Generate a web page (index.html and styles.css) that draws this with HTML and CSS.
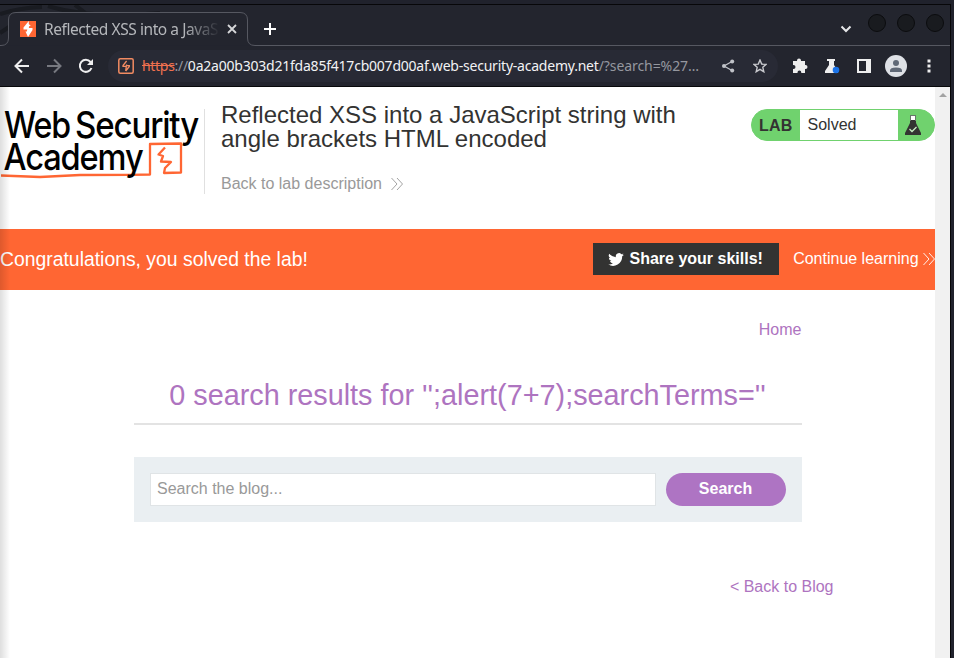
FILE: index.html
```html
<!DOCTYPE html>
<html lang="en">
<head>
<meta charset="utf-8">
<title>Reflected XSS into a JavaScript string with angle brackets HTML encoded</title>
<link rel="stylesheet" href="styles.css">
</head>
<body>
<div class="browser">
  <div class="tabbar">
    <svg class="tab-outline" width="950" height="41" viewBox="0 0 950 41">
      <path class="decor" d="M48 1Q90 14 160 8M0 9Q18 3 42 2M75 0L88 10M0 28L9 22" />
      <path class="tab-shape" d="M0 40.5H1Q8.500 40.500 8.500 33V15Q8.500 7.500 16 7.500H240Q247.500 7.500 247.500 15V33Q247.500 40.500 255 40.500H950" />
    </svg>
    <div class="tab">
      <svg class="favicon" width="16" height="16" viewBox="0 0 16 16"><path fill="#ff6633" d="M0 0h16v16H0z"/><path fill="#fff" d="M8.800 0L3.500 6.500V8.500H7.300L6.800 10.500H5.500L8 16L12.500 9V7H8.800L9.300 5H10.800L8.800 3z"/></svg>
      <span class="tab-title">Reflected XSS into a JavaSc</span>
      <svg class="close" width="10" height="10" viewBox="0 0 10 10"><path d="M1 1L9 9M9 1L1 9"/></svg>
    </div>
    <svg class="plus" width="12" height="12" viewBox="0 0 12 12"><path d="M6 0V12M0 6H12"/></svg>
    <svg class="chevron" width="12" height="8" viewBox="0 0 12 8"><path d="M1.500 1.500L6 6L10.500 1.500"/></svg>
    <div class="window-buttons"><i></i><i></i><i></i></div>
  </div>

  <div class="toolbar">
    <svg class="nav" width="16" height="16" viewBox="0 0 16 16"><path d="M15 8H2M8 1.500L1.500 8L8 14.500"/></svg>
    <svg class="nav forward" width="16" height="16" viewBox="0 0 16 16"><path d="M1 8H14M8 1.500L14.500 8L8 14.500"/></svg>
    <svg class="nav" width="16" height="16" viewBox="0 0 16 16"><path d="M13.500 10A6 6 0 1 1 12.500 4L14 5.500"/><path class="solid" d="M15 1V7H9z"/></svg>
    <div class="address">
      <svg width="16" height="16" viewBox="0 0 16 16"><rect x=".8" y=".8" width="14.400" height="14.400" rx="1.500" fill="none" stroke="#f28b62" stroke-width="1.500"/><path d="M8.600 3L5 7.500V8.300H8.300L7.700 13M8.300 8.300L8.600 6.500M7.700 13L11.300 8.500V7.700H9" fill="none" stroke="#f28b62" stroke-width="1.300"/></svg>
      <span class="url"><span class="scheme">https</span>://<span class="domain">0a2a00b303d21fda85f417cb007d00af.web-security-academy.net</span><span class="path">/?search=%27…</span></span>
      <svg class="share" width="14" height="14" viewBox="0 0 14 14"><path d="M11 2.500L3 7L11 11.500" fill="none" stroke="#c0c2c8" stroke-width="1.300"/><g fill="#c0c2c8"><circle cx="11.200" cy="2.500" r="2"/><circle cx="3" cy="7" r="2"/><circle cx="11.200" cy="11.500" r="2"/></g></svg>
      <svg class="star" width="14" height="14" viewBox="0 0 14 14"><path d="M7 1L8.700 5.100L13.100 5.400L9.800 8.300L10.800 12.700L7 10.300L3.200 12.700L4.200 8.300L.9 5.400L5.300 5.100Z" fill="none" stroke="#c8c9ce" stroke-width="1.400"/></svg>
    </div>
    <div class="actions">
      <svg width="16" height="16" viewBox="0 0 16 16"><path fill="#eee" d="M1 3h4V2.500a2 2 0 0 1 4 0V3h4v4h.5a2 2 0 0 1 0 4H13v4H9.300v-.5a1.900 1.900 0 0 0-3.800 0v.5H1v-4h.5a2 2 0 0 0 0-4H1z"/></svg>
      <svg width="16" height="16" viewBox="0 0 16 16"><path fill="#eee" d="M3 1h8v2h-1v4l4 6v2H1v-2l4-6V3H3z"/><circle cx="12" cy="12" r="3.300" fill="#1a73e8"/></svg>
      <svg width="16" height="16" viewBox="0 0 16 16"><path fill="#eee" fill-rule="evenodd" d="M1 1h14v14H1zM3 3v10h7V3z"/></svg>
      <svg width="22" height="22" viewBox="0 0 22 22"><circle cx="11" cy="11" r="11" fill="#dee1e6"/><circle cx="11" cy="8" r="3" fill="#5f6876"/><path fill="#5f6876" d="M5 17v-1.500Q5 12.500 11 12.500T17 15.500V17z"/></svg>
      <svg width="4" height="14" viewBox="0 0 4 14"><path fill="#eee" d="M.5 .5h3v3h-3zM.5 5.500h3v3h-3zM.5 10.500h3v3h-3z"/></svg>
    </div>
  </div>

  <div class="viewport">
    <main class="page">
      <header class="lab-header">
        <svg class="logo" width="204" height="85" viewBox="0 0 204 85">
          <path class="scribble" d="M1 66.500L40 68L80 66L131 65.800L150 65.500V35L181 34.500V63.500L164 64L165 59L171 53L161 52.500L163 47L158.500 45.500L165 38.500" />
          <text x="4" y="28.500" textLength="66" lengthAdjust="spacingAndGlyphs">Web</text>
          <text x="75" y="28.500" textLength="123" lengthAdjust="spacingAndGlyphs">Security</text>
          <text x="3.500" y="61" textLength="139" lengthAdjust="spacingAndGlyphs">Academy</text>
        </svg>
        <div class="title">
          <h2>Reflected XSS into a JavaScript string with angle brackets HTML encoded</h2>
          <a class="back-link">Back to lab description <svg width="12" height="12" viewBox="0 0 12 12"><path d="M.5 0L6 6L.5 12M6 0L11.500 6L6 12"/></svg></a>
        </div>
        <div class="status"><strong>LAB</strong><span>Solved</span>
          <svg width="16" height="20" viewBox="0 0 16 20"><path fill="#333332" d="M5 5h6v3l5 10v2H0v-2L5 8z"/><path fill="#fff" d="M6 1h4v4H6z"/><path fill="none" stroke="#66776a" d="M5 .5h6M5.500 1v5M10.500 1v5"/><path fill="none" stroke="#c8efc4" stroke-width="1.300" d="M4.500 14l2.500 2.500L11.500 12"/></svg>
        </div>
      </header>

      <section class="banner">
        <h4>Congratulations, you solved the lab!</h4>
        <button class="share-button"><svg width="16" height="13" viewBox="0 2 24 20"><path fill="#fff" d="M24 4.600a10 10 0 0 1-2.800.8A5 5 0 0 0 23.300 2.700a10 10 0 0 1-3.100 1.200A4.900 4.900 0 0 0 11.800 8.400 14 14 0 0 1 1.700 3.200a4.900 4.900 0 0 0 1.500 6.600A5 5 0 0 1 1 9.200a4.900 4.900 0 0 0 3.900 4.900 5 5 0 0 1-2.200.1 4.900 4.900 0 0 0 4.600 3.400A10 10 0 0 1 0 19.500 14 14 0 0 0 21.500 7.100 10 10 0 0 0 24 4.600z"/></svg>Share your skills!</button>
        <a class="continue">Continue learning <svg width="12" height="12" viewBox="0 0 12 12"><path d="M.5 0L6 6L.5 12M6 0L11.500 6L6 12"/></svg></a>
      </section>

      <section class="blog">
        <nav><a>Home</a></nav>
        <h1>0 search results for '';alert(7+7);searchTerms=''</h1>
        <form class="search">
          <input type="text" placeholder="Search the blog...">
          <button type="button">Search</button>
        </form>
      </section>
      <footer><a>&lt; Back to Blog</a></footer>
    </main>
    <div class="scrollbar"><i></i></div>
  </div>
</div>
</body>
</html>
```
FILE: styles.css
```css
* { box-sizing: border-box; }
body { margin: 0; width: 954px; height: 658px; overflow: hidden; background: #20222c; font-family: "Liberation Sans", Arial, sans-serif; }
svg { display: block; flex: none; }
.browser { width: 951px; height: 654px; margin-top: 4px; border-top: 1px solid #070709; border-right: 1px solid #070709; background: #23252e; }

.tabbar { position: relative; display: flex; height: 41px; background: #23252e; font-family: "Noto Sans", sans-serif; }
.tab-outline { position: absolute; left: 0; top: 0; }
.tab-outline path { fill: none; }
.decor { stroke: #191b21; stroke-width: 4; }
.tab-outline .tab-shape { fill: #23252e; stroke: #565861; stroke-width: 1; }
.tab { position: relative; display: flex; align-items: center; width: 248px; height: 32px; margin-top: 8px; padding-left: 20px; }
.tab-title { width: 174px; margin-left: 8px; overflow: hidden; white-space: nowrap; font-size: 15.5px; letter-spacing: -.43px; line-height: 22px; margin-top: -1px; color: #b5b7bb; -webkit-mask-image: linear-gradient(to right, #000 140px, transparent 176px); mask-image: linear-gradient(to right, #000 140px, transparent 176px); }
.close { margin-left: 9px; stroke: #d6d7d9; stroke-width: 1.8; }
.plus { position: relative; margin: 18px 0 0 16px; stroke: #fff; stroke-width: 2; }
.chevron { position: relative; margin: 20px 13px 0 auto; fill: none; stroke: #e6e7e9; stroke-width: 2; }
.window-buttons { position: relative; display: flex; gap: 11px; margin: 9px 6px 0 3px; }
.window-buttons i { width: 18px; height: 18px; border: 1px solid #0b0c0e; border-radius: 50%; background: #191b1f; }

.toolbar { display: flex; align-items: center; height: 41px; padding-left: 14px; border-bottom: 1px solid #08090b; font-family: "Noto Sans", sans-serif; }
.nav { margin-right: 16px; fill: none; stroke: #eeeeef; stroke-width: 2; }
.nav.forward { stroke: #777980; }
.nav .solid { fill: #eee; stroke: none; }
.address { display: flex; align-items: center; width: 670px; height: 32px; margin-left: -2px; padding-left: 10px; border-radius: 16px; background: #282a35; }
.url { width: 562px; margin-left: 8px; white-space: nowrap; font-size: 14px; letter-spacing: -.3px; line-height: 20px; color: #95979f; }
.scheme { color: #f0714f; text-decoration: line-through; }
.domain { letter-spacing: -.22px; color: #f2f2f4; }
.path { letter-spacing: -.07px; }
.share { margin-left: 17px; }
.star { margin-left: 18px; }
.actions { display: flex; align-items: center; margin-left: 14px; }
.actions svg { margin-right: 16px; }
.actions svg:nth-child(3) { margin-right: 13px; }
.actions svg:nth-child(4) { margin-right: 20px; }

.viewport { display: flex; height: 571px; background: #fff; }
.page { position: relative; width: 935px; height: 571px; overflow: hidden; }
.page::after { content: ""; position: absolute; left: 0; top: 0; width: 10px; height: 571px; background: linear-gradient(to right, rgba(0,0,0,.13), rgba(0,0,0,0)); }
.scrollbar { width: 15px; background: #f1f1f1; }
.scrollbar i { display: block; width: 0; height: 0; margin: 6px auto 0; border: 4px solid transparent; border-top: 0; border-bottom: 4px solid #a3a3a3; }

.lab-header { display: flex; height: 142px; padding-top: 22px; }
.logo { overflow: visible; font: 500 37px Inter, sans-serif; letter-spacing: -1.3px; }
.logo .scribble { fill: none; stroke: #ff6633; stroke-width: 2.3; stroke-linejoin: round; }
.title { width: 495px; height: 85px; padding-left: 16px; border-left: 1px solid #e0e0e0; }
h2 { margin: -6px 0 0; font-size: 24px; line-height: 24px; font-weight: 400; color: #333332; }
.back-link, .continue { display: flex; align-items: center; font-size: 16px; line-height: 20px; white-space: pre; }
.back-link { margin-top: 23px; gap: 4.5px; color: #999; }
.back-link svg, .continue svg { fill: none; stroke: currentColor; stroke-width: .9; }
.status { display: flex; align-items: center; width: 184px; height: 32px; margin-left: 52px; border: 1px solid #70d26e; border-radius: 16px; background: #70d26e; color: #333332; font-size: 16px; }
.status strong { width: 48px; padding: 1px 0 0 7px; letter-spacing: .2px; }
.status span { width: 98px; height: 30px; padding-left: 7.5px; line-height: 30px; background: #fff; }
.status svg { margin-left: 7px; }

.banner { display: flex; align-items: center; height: 61px; padding-bottom: 1px; background: #ff6633; color: #fff; }
h4 { width: 593px; margin: 0; font-size: 19.36px; font-weight: 400; }
.share-button { display: flex; align-items: center; justify-content: center; gap: 5px; width: 186px; height: 32px; margin: 0 14.5px 0 0; padding: 0; border: 0; background: #333332; color: #fff; font: bold 16px "Liberation Sans", Arial, sans-serif; white-space: nowrap; }

.blog { width: 668px; margin-left: 134px; color: #ae74c0; }
.blog nav { padding: 30px .5px 0 0; text-align: right; font-size: 16px; line-height: 20px; }
h1 { height: 55px; margin: 30px 0 0; padding-right: 1px; border-bottom: 2px solid #e3e3e3; font-size: 28.8px; line-height: 51px; font-weight: 400; text-align: center; white-space: nowrap; }
.search { display: flex; height: 65px; margin: 32px 0 0; padding: 16px; background: #eaeff2; }
.search input { width: 506px; height: 33px; margin: 0 10px 0 0; padding: 0 6px 2px; border: 1px solid #e0e4e6; background: #fff; font: 16px "Liberation Sans", Arial, sans-serif; }
.search input::placeholder { color: #999; opacity: 1; }
.search button { width: 120px; height: 33px; padding: 0 1px 2px 0; border: 0; border-radius: 17px; background: #ae74c3; color: #fff; font: bold 16px "Liberation Sans", Arial, sans-serif; }
footer { width: 833.5px; margin-top: 55px; text-align: right; font-size: 16px; line-height: 20px; color: #ae74c0; }
```
